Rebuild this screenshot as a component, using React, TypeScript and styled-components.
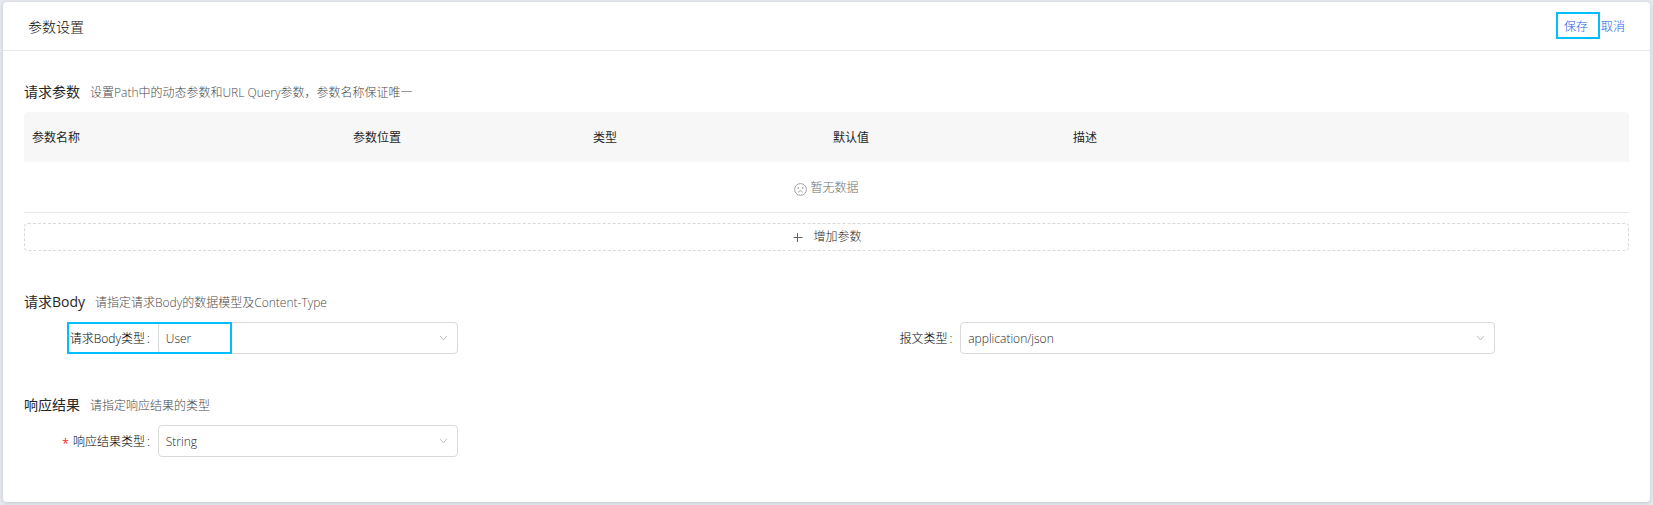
import React from "react";
import styled, { createGlobalStyle } from "styled-components";

const GlobalStyle = createGlobalStyle`
  *, *::before, *::after {
    box-sizing: border-box;
  }
  body {
    margin: 0;
    background: #e6eaef;
    color: #262626;
    font-family: "Open Sans", "Noto Sans CJK SC", sans-serif;
    font-size: 12px;
    font-weight: 300;
    line-height: 18px;
  }
  button, select {
    font: inherit;
    color: inherit;
  }
`;

const Page = styled.main`
  padding: 2px 3px 3px;
`;

const Card = styled.div`
  background: #fff;
  border-radius: 4px;
  box-shadow: 0 1px 4px rgba(0, 21, 41, 0.16);
`;

const CardHeader = styled.header`
  display: flex;
  align-items: center;
  justify-content: space-between;
  height: 49px;
  padding: 1px 25px 0;
  border-bottom: 1px solid #e8e8e8;
`;

const CardTitle = styled.h1`
  margin: 0;
  font-size: 14px;
  font-weight: 300;
  line-height: 22px;
  color: #0d0d0d;
`;

const Actions = styled.div`
  display: flex;
  gap: 13px;
`;

const LinkButton = styled.button`
  position: relative;
  padding: 0;
  border: 0;
  background: none;
  color: #1a5ff0;
  cursor: pointer;
`;

const SaveMark = styled.span`
  position: absolute;
  inset: -6px -12px -3px -8px;
  border: 2px solid #00bfff;
  pointer-events: none;
`;

const CardBody = styled.div`
  padding: 30px 21px 45px;
`;

const Section = styled.section`
  & + & {
    margin-top: 40px;
  }
`;

const SectionHead = styled.div`
  display: flex;
  align-items: baseline;
  gap: 10px;
  height: 31px;
`;

const SectionTitle = styled.h2`
  margin: 0;
  font-size: 14px;
  font-weight: 400;
  line-height: 22px;
  color: #262626;
`;

const SectionHint = styled.p`
  margin: 0;
  color: #4a4a4a;
`;

const ParamTable = styled.table`
  width: 100%;
  table-layout: fixed;
  border-collapse: separate;
  border-spacing: 0;
`;

const HeadCell = styled.th<{ $width?: string }>`
  width: ${(p) => p.$width ?? "auto"};
  height: 50px;
  padding: 2px 8px 0;
  background: #f7f7f7;
  color: #262626;
  font-weight: 400;
  text-align: left;

  &:first-child {
    border-top-left-radius: 4px;
  }
  &:last-child {
    border-top-right-radius: 4px;
  }
`;

const EmptyCell = styled.td`
  height: 51px;
  padding: 2px 0 0;
  border-bottom: 1px solid #e8e8e8;
  color: #6e6e6e;
`;

const EmptyNote = styled.div`
  display: flex;
  align-items: center;
  justify-content: center;
  gap: 3px;
`;

const AddButton = styled.button`
  display: flex;
  align-items: center;
  justify-content: center;
  gap: 10px;
  width: 100%;
  height: 28px;
  margin-top: 10px;
  padding: 0 0 0 2px;
  border: 1px dashed #d9d9d9;
  border-radius: 4px;
  background: #fff;
  cursor: pointer;
`;

const FormRow = styled.div`
  display: grid;
  grid-template-columns: 1fr 1fr;
`;

const Field = styled.div`
  position: relative;
  display: grid;
  grid-template-columns: 4fr 16fr 4fr;
  align-items: center;
`;

const FieldLabel = styled.label<{ $required?: boolean }>`
  padding: 2px 8px 0 0;
  color: #000;
  text-align: right;
  white-space: nowrap;

  &::before {
    content: ${(p) => (p.$required ? '"*"' : "none")};
    margin-right: 4px;
    color: #f5222d;
    font-weight: 400;
    line-height: 12px;
    vertical-align: -2px;
  }
  &::after {
    content: ":";
    margin-left: 2px;
  }
`;

const SelectBox = styled.div<{ $width?: string }>`
  display: grid;
  align-items: center;
  width: ${(p) => p.$width ?? "100%"};

  & > * {
    grid-area: 1 / 1;
  }
  & > svg {
    justify-self: end;
    margin-right: 10px;
    pointer-events: none;
  }
`;

const Select = styled.select`
  width: 100%;
  height: 32px;
  padding: 2px 28px 0 7px;
  border: 1px solid #d9d9d9;
  border-radius: 4px;
  background: #fff;
  appearance: none;
`;

const FieldMark = styled.span`
  position: absolute;
  top: 0;
  left: 43px;
  width: 165px;
  height: 32px;
  border: 2px solid #00bfff;
  pointer-events: none;
`;

const Chevron = () => (
  <svg width="9" height="9" viewBox="0 0 9 9" fill="none" stroke="#bfbfbf" aria-hidden="true">
    <path d="M1.2 2L4.5 6L7.8 2" />
  </svg>
);

const Frown = () => (
  <svg width="13" height="16" viewBox="0 0 13 16" fill="none" stroke="#8c8c8c" strokeWidth="0.8" aria-hidden="true">
    <circle cx="6.5" cy="9.5" r="5.9" />
    <path d="M4.8 12.4C5 10.2 8 10.2 8.2 12.4" />
    <circle cx="4.2" cy="8" r="0.4" fill="#8c8c8c" />
    <circle cx="8.8" cy="8" r="0.4" fill="#8c8c8c" />
  </svg>
);

const Plus = () => (
  <svg width="10" height="10" viewBox="0 0 10 10" fill="none" stroke="#666" aria-hidden="true">
    <path d="M0.5 5.5H9.5M4.5 1V10" />
  </svg>
);

type SelectFieldProps = {
  id: string;
  label: string;
  options: string[];
  width?: string;
  required?: boolean;
  marked?: boolean;
};

const SelectField = ({ id, label, options, width, required, marked }: SelectFieldProps) => (
  <Field>
    <FieldLabel htmlFor={id} $required={required}>
      {label}
    </FieldLabel>
    <SelectBox $width={width}>
      <Select id={id} required={required}>
        {options.map((option) => (
          <option key={option}>{option}</option>
        ))}
      </Select>
      <Chevron />
    </SelectBox>
    {marked && <FieldMark />}
  </Field>
);

const columns = [
  { title: "参数名称", width: "20%" },
  { title: "参数位置", width: "240px" },
  { title: "类型", width: "240px" },
  { title: "默认值", width: "240px" },
  { title: "描述" },
];

export default function App() {
  return (
    <Page>
      <GlobalStyle />
      <Card>
        <CardHeader>
          <CardTitle>参数设置</CardTitle>
          <Actions>
            <LinkButton type="button">
              保存
              <SaveMark />
            </LinkButton>
            <LinkButton type="button">取消</LinkButton>
          </Actions>
        </CardHeader>
        <CardBody>
          <Section>
            <SectionHead>
              <SectionTitle>请求参数</SectionTitle>
              <SectionHint>设置Path中的动态参数和URL Query参数，参数名称保证唯一</SectionHint>
            </SectionHead>
            <ParamTable>
              <thead>
                <tr>
                  {columns.map((column) => (
                    <HeadCell key={column.title} scope="col" $width={column.width}>
                      {column.title}
                    </HeadCell>
                  ))}
                </tr>
              </thead>
              <tbody>
                <tr>
                  <EmptyCell colSpan={columns.length}>
                    <EmptyNote>
                      <Frown />
                      暂无数据
                    </EmptyNote>
                  </EmptyCell>
                </tr>
              </tbody>
            </ParamTable>
            <AddButton type="button">
              <Plus />
              增加参数
            </AddButton>
          </Section>
          <Section>
            <SectionHead>
              <SectionTitle>请求Body</SectionTitle>
              <SectionHint>请指定请求Body的数据模型及Content-Type</SectionHint>
            </SectionHead>
            <FormRow>
              <SelectField id="body-type" label="请求Body类型" options={["User"]} width="300px" marked />
              <SelectField id="content-type" label="报文类型" options={["application/json"]} />
            </FormRow>
          </Section>
          <Section>
            <SectionHead>
              <SectionTitle>响应结果</SectionTitle>
              <SectionHint>请指定响应结果的类型</SectionHint>
            </SectionHead>
            <FormRow>
              <SelectField id="result-type" label="响应结果类型" options={["String"]} width="300px" required />
            </FormRow>
          </Section>
        </CardBody>
      </Card>
    </Page>
  );
}
